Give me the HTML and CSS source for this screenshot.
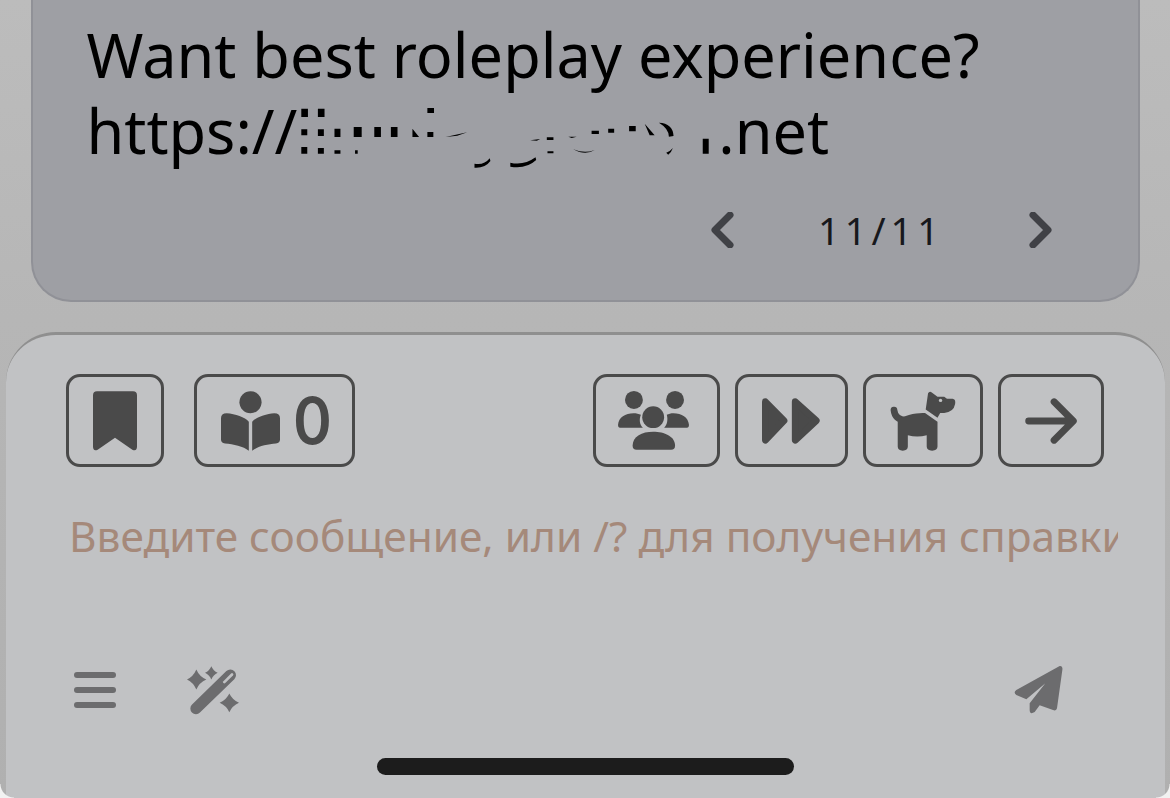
FILE: index.html
```html
<!DOCTYPE html>
<html lang="en">
<head>
    <meta charset="UTF-8">
    <title>Chat</title>
    <link rel="stylesheet" href="styles.css">
</head>
<body>
    <div class="message">
        <div class="message-text">
            <div>Want best roleplay experience?</div>
            <div>https://<svg class="smudge" viewBox="81 0 1275 270" width="423" height="90" preserveAspectRatio="none" aria-hidden="true">
                <path d="M100 50h20v25h-20zM150 50h20v25h-20zM480 48h20v15h-20zM100 112h18v18h-18zM100 165h18v20h-18zM150 112h18v20h-18zM150 168h18v17h-18zM200 110h18v25h-18zM200 175h18v10h-18zM258 105h24v30h-24zM262 175h8v10h-8zM320 105h20v30h-20zM370 105h20v30h-20zM435 110l20 25h-20zM480 120h18v15h-18zM535 135l65-14-30 10zM790 145l30-4-10 5zM840 136h20v8h-20zM905 134h25l-15 4zM842 178h18v6h-18zM975 116h22v10h-22zM1025 110h18v12h-18zM1088 102h20v16h-20zM1135 95l30 35h-15zM1310 140h18v45h-18z"/>
                <path d="M622 215q28 6 46-16l2 8q-16 22-48 20zM730 212q40 10 76-16l2 8q-30 28-78 20zM920 172q34 14 64 2q-28 18-64-2zM1178 92q42 2 44 40l-14 2q0-24-30-42zM1200 182q12-4 20-14q-4 12-14 20z"/>
            </svg>.net</div>
        </div>
        <div class="pager">
            <svg class="chevron" viewBox="0 0 24 36" width="24" height="36"><path d="M20 3L5 18L20 33"/></svg>
            <span class="pager-count">11/11</span>
            <svg class="chevron" viewBox="0 0 24 36" width="24" height="36"><path d="M4 3L19 18L4 33"/></svg>
        </div>
    </div>

    <div class="composer">
        <div class="toolbar">
            <div class="tool-group left">
                <div class="tool tool-bookmark">
                    <svg viewBox="130 93 132 178" width="44" height="60"><path d="M130 105Q130 93 142 93H250Q262 93 262 105V258Q262 274 248 268L196 232L144 268Q130 274 130 258Z"/></svg>
                </div>
                <div class="tool tool-reader">
                    <svg viewBox="513 94 176 178" width="59" height="60">
                        <circle cx="601" cy="127" r="33"/>
                        <path d="M513 175Q513 160 530 160C555 162 585 172 596 185V272C580 258 550 252 525 250Q513 248 513 238Z"/>
                        <path d="M689 175Q689 160 672 160C647 162 617 172 606 185V272C622 258 652 252 677 250Q689 248 689 238Z"/>
                    </svg>
                    <span class="tool-count">0</span>
                </div>
            </div>
            <div class="tool-group right">
                <div class="tool tool-people">
                    <svg viewBox="113 93 214 178" width="71" height="59">
                        <circle cx="161" cy="120" r="27"/>
                        <circle cx="285" cy="120" r="27"/>
                        <circle cx="219" cy="172" r="33"/>
                        <path d="M157 258C157 230 185 216 219 216C253 216 285 230 285 258Q285 270 273 270H169Q157 270 157 258Z"/>
                        <path d="M113 195C115 172 135 160 160 160C168 160 176 162 182 165C176 178 178 195 188 204H119Q113 204 113 195Z"/>
                        <path d="M327 195C325 172 305 160 280 160C272 160 266 162 260 165C264 178 262 195 252 204H321Q327 204 327 195Z"/>
                    </svg>
                </div>
                <div class="tool tool-forward">
                    <svg viewBox="528 115 172 134" width="59" height="46">
                        <path class="rounded" d="M538 126L592 181L538 238Z"/>
                        <path class="rounded" d="M625 126L686 181L625 238Z"/>
                    </svg>
                </div>
                <div class="tool tool-dog">
                    <svg viewBox="900 93 194 178" width="66" height="60">
                        <path class="tail" d="M911 150C913 170 925 178 945 180"/>
                        <path d="M922 178C950 160 985 158 1003 158L1040 184V258Q1040 270 1024 270Q1008 270 1008 258V224Q980 232 952 224V258Q952 270 937 270Q922 270 922 258Z"/>
                        <path d="M1012 100Q1016 92 1024 98L1040 110H1060L1068 116H1085Q1095 118 1092 132Q1088 155 1060 158H1048L1040 172L1005 148Z"/>
                        <circle class="eye" cx="1049" cy="121" r="5"/>
                    </svg>
                </div>
                <div class="tool tool-arrow">
                    <svg viewBox="1292 115 150 134" width="52" height="46"><path class="line" d="M1302 182H1428M1376 126L1432 182L1376 238"/></svg>
                </div>
            </div>
        </div>

        <div class="input-hint">Введите сообщение, или /? для получения справки</div>

        <div class="actions">
            <div class="actions-left">
                <div class="bars"><span></span><span></span><span></span></div>
                <svg class="icon-wand" viewBox="410 45 156 146" width="52" height="49">
                    <path class="wand" d="M437 172L540 72"/>
                    <path class="wand-slit" d="M522 93L545 70"/>
                    <path d="M438 55Q447 76 468 85Q447 94 438 115Q429 94 410 85Q429 76 438 55Z"/>
                    <path d="M483 45Q489 59 502 65Q489 71 483 85Q477 71 464 65Q477 59 483 45Z"/>
                    <path d="M537 127Q546 146 566 155Q546 164 537 183Q528 164 508 155Q528 146 537 127Z"/>
                </svg>
            </div>
            <svg class="icon-send" viewBox="100 45 150 150" width="50" height="50">
                <path d="M240 48Q250 46 248 60L232 175Q230 184 220 180L180 166L165 186Q150 195 150 180V160L197 100L140 148L110 135Q100 128 110 120Z"/>
            </svg>
        </div>

        <div class="home-bar"></div>
    </div>

    <div class="screen-corner corner-left"></div>
    <div class="screen-corner corner-right"></div>
</body>
</html>
```

FILE: styles.css
```css
* {
    box-sizing: border-box;
}
body {
    margin: 0;
    height: 798px;
    overflow: hidden;
    position: relative;
    background: linear-gradient(180deg, #bcbcbc 0%, #b6b6b6 40%, #b0b0b0 100%);
    font-family: 'Noto Sans', Arial, sans-serif;
    display: flex;
    flex-direction: column;
    align-items: center;
}
.message {
    width: 1109px;
    height: 302px;
    background: #9e9fa4;
    border: 2px solid #909197;
    border-top: none;
    border-radius: 0 0 40px 40px;
    padding: 17px 54px 0;
    color: #000;
    flex-shrink: 0;
}
.message-text {
    font-size: 61.2px;
    line-height: 75px;
    height: 168px;
    white-space: nowrap;
}
.smudge {
    margin-left: -2px;
    vertical-align: -28px;
    fill: #000;
}
.pager {
    display: flex;
    align-items: center;
    justify-content: flex-end;
    margin-top: 25px;
    padding-right: 31px;
}
.chevron {
    fill: none;
    stroke: #404146;
    stroke-width: 7;
    stroke-linecap: round;
    stroke-linejoin: round;
}
.pager-count {
    font-size: 38px;
    line-height: 40px;
    letter-spacing: 5px;
    color: #17181c;
    width: 295px;
    text-align: center;
}
.composer {
    width: 1159px;
    flex: 1;
    align-self: flex-start;
    margin: 30px 0 0 6px;
    background: #c1c2c4;
    border-top: 3px solid #8f8f8f;
    border-radius: 50px 50px 0 0;
    padding: 39px 61px 0 60px;
}
.toolbar {
    display: flex;
    justify-content: space-between;
}
.tool-group {
    display: flex;
}
.tool-group.left {
    gap: 30px;
}
.tool-group.right {
    gap: 15px;
}
.tool {
    height: 93px;
    border: 3px solid #4a4a4a;
    border-radius: 14px;
    display: flex;
    align-items: center;
    justify-content: center;
    fill: #4a4a4a;
}
.tool-bookmark {
    width: 98px;
}
.tool-reader {
    width: 161px;
    gap: 13px;
    justify-content: flex-start;
    padding-left: 24px;
}
.tool-count {
    font-family: Inter, Arial, sans-serif;
    font-size: 64px;
    font-weight: 600;
    line-height: 62px;
    color: #4a4a4a;
    transform: scaleX(0.92);
    transform-origin: left center;
}
.tool-people {
    width: 127px;
    padding-right: 7px;
}
.tool-forward {
    width: 113px;
}
.tool-dog {
    width: 120px;
}
.tool-arrow {
    width: 106px;
}
.rounded {
    stroke: #4a4a4a;
    stroke-width: 20;
    stroke-linejoin: round;
}
.tail {
    fill: none;
    stroke: #4a4a4a;
    stroke-width: 20;
    stroke-linecap: round;
}
.eye {
    fill: #c1c2c4;
}
.line {
    fill: none;
    stroke: #4a4a4a;
    stroke-width: 20;
    stroke-linecap: round;
    stroke-linejoin: round;
}
.input-hint {
    margin-top: 41px;
    width: 1049px;
    margin-left: 3px;
    font-size: 42.4px;
    line-height: 56px;
    color: #a5897a;
    white-space: nowrap;
    overflow: hidden;
}
.actions {
    margin-top: 101px;
    display: flex;
    justify-content: space-between;
    align-items: center;
    padding: 0 41px 0 8px;
}
.actions-left {
    display: flex;
    align-items: center;
    gap: 71px;
}
.bars {
    display: flex;
    flex-direction: column;
    gap: 9px;
}
.bars span {
    display: block;
    width: 42px;
    height: 6px;
    border-radius: 3px;
    background: #6c6c6e;
}
.icon-wand, .icon-send {
    fill: #6c6c6e;
}
.wand {
    fill: none;
    stroke: #6c6c6e;
    stroke-width: 34;
    stroke-linecap: round;
}
.wand-slit {
    fill: none;
    stroke: #c1c2c4;
    stroke-width: 8;
    stroke-linecap: round;
}
.home-bar {
    width: 417px;
    height: 17px;
    border-radius: 9px;
    background: #1c1c1c;
    margin: 43px auto 0;
}
.screen-corner {
    position: absolute;
    bottom: 0;
    width: 14px;
    height: 14px;
}
.corner-left {
    left: 0;
    background: radial-gradient(circle at 100% 0, transparent 13px, #f2f2f2 14px);
}
.corner-right {
    right: 0;
    background: radial-gradient(circle at 0 0, transparent 13px, #f2f2f2 14px);
}
```
